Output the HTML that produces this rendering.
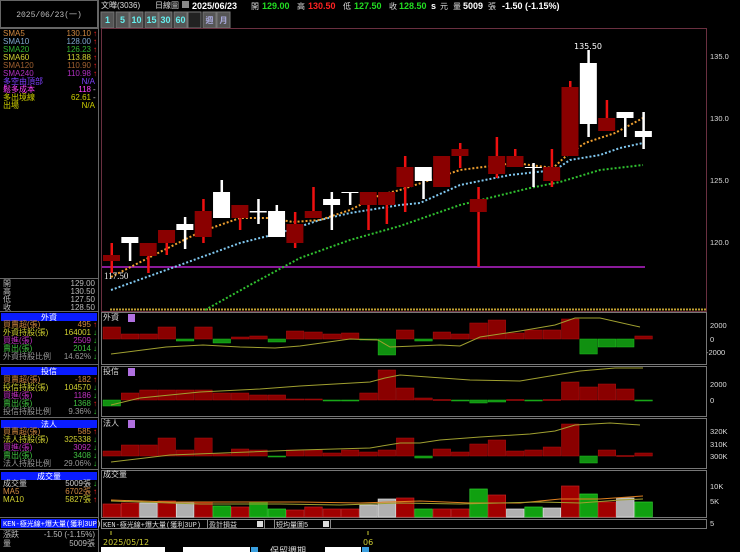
<!DOCTYPE html>
<html><head><meta charset="utf-8"><style>
html,body{margin:0;padding:0;background:#000;width:740px;height:552px;overflow:hidden}
svg{display:block}
text{font-family:"Liberation Sans","Noto Sans CJK TC",sans-serif}
.s{font-size:8px}
.m{font-family:"Liberation Mono","Noto Sans CJK TC",monospace;font-size:8px}
.k{font-family:"Liberation Mono","Noto Sans CJK TC",monospace;font-size:7px}
</style></head><body>
<svg id="g" width="740" height="552" xmlns="http://www.w3.org/2000/svg">
<rect width="740" height="552" fill="#000"/>
<rect x="0.5" y="0.5" width="97" height="27" fill="none" stroke="#666"/>
<text x="49" y="17" class="m" fill="#bbb" text-anchor="middle">2025/06/23(一)</text>
<line x1="98.5" y1="0" x2="98.5" y2="552" stroke="#666"/>
<line x1="0" y1="28.5" x2="98" y2="28.5" stroke="#666"/>
<g class="m">
<text x="3" y="36" fill="#d08840">SMA5</text><text x="91" y="36" fill="#d08840" text-anchor="end">130.10</text><text x="93" y="36" fill="#f22">↑</text>
<text x="3" y="44" fill="#80a8d0">SMA10</text><text x="91" y="44" fill="#80a8d0" text-anchor="end">128.00</text><text x="93" y="44" fill="#f22">↑</text>
<text x="3" y="52" fill="#30b030">SMA20</text><text x="91" y="52" fill="#30b030" text-anchor="end">126.23</text><text x="93" y="52" fill="#f22">↑</text>
<text x="3" y="60" fill="#d0d030">SMA60</text><text x="91" y="60" fill="#d0d030" text-anchor="end">113.88</text><text x="93" y="60" fill="#f22">↑</text>
<text x="3" y="68" fill="#a06030">SMA120</text><text x="91" y="68" fill="#a06030" text-anchor="end">110.90</text><text x="93" y="68" fill="#f22">↑</text>
<text x="3" y="76" fill="#b030c0">SMA240</text><text x="91" y="76" fill="#b030c0" text-anchor="end">110.98</text><text x="93" y="76" fill="#f22">↑</text>
<text x="3" y="84" fill="#8040ff">多空由頂部</text><text x="95" y="84" fill="#8040ff" text-anchor="end">N/A</text>
<text x="3" y="92" fill="#ff40ff">鬆多成本</text><text x="91" y="92" fill="#ff40ff" text-anchor="end">118</text><text x="93" y="92" fill="#ccc">-</text>
<text x="3" y="100" fill="#d0d000">多出境線</text><text x="91" y="100" fill="#d0d000" text-anchor="end">62.61</text><text x="93" y="100" fill="#ccc">-</text>
<text x="3" y="108" fill="#d0d000">出場</text><text x="95" y="108" fill="#d0d000" text-anchor="end">N/A</text>
</g>
<line x1="0" y1="278.5" x2="98" y2="278.5" stroke="#666"/>
<g class="m" fill="#bbb">
<text x="3" y="286">開</text><text x="95" y="286" text-anchor="end">129.00</text>
<text x="3" y="294">高</text><text x="95" y="294" text-anchor="end">130.50</text>
<text x="3" y="302">低</text><text x="95" y="302" text-anchor="end">127.50</text>
<text x="3" y="310">收</text><text x="95" y="310" text-anchor="end">128.50</text>
</g>
<line x1="0" y1="311.5" x2="98" y2="311.5" stroke="#666"/>
<rect x="1" y="313" width="96" height="8" fill="#0a1cff"/><text x="49" y="320" class="m" fill="#fff" text-anchor="middle">外資</text>
<g class="m">
<text x="3" y="327" fill="#d08840">買賣超(張)</text><text x="91" y="327" fill="#d08840" text-anchor="end">495</text><text x="93" y="327" fill="#f22">↑</text>
<text x="3" y="335" fill="#d0d030">外資持股(張)</text><text x="91" y="335" fill="#d0d030" text-anchor="end">164001</text><text x="93" y="335" fill="#3c3">↓</text>
<text x="3" y="343" fill="#c030c0">買進(張)</text><text x="91" y="343" fill="#c030c0" text-anchor="end">2509</text><text x="93" y="343" fill="#3c3">↓</text>
<text x="3" y="351" fill="#40c040">賣出(張)</text><text x="91" y="351" fill="#40c040" text-anchor="end">2014</text><text x="93" y="351" fill="#3c3">↓</text>
<text x="3" y="359" fill="#999">外資持股比例</text><text x="91" y="359" fill="#999" text-anchor="end">14.62%</text><text x="93" y="359" fill="#3c3">↓</text>
</g>
<line x1="0" y1="364.5" x2="98" y2="364.5" stroke="#666"/>
<rect x="1" y="367" width="96" height="8" fill="#0a1cff"/><text x="49" y="374" class="m" fill="#fff" text-anchor="middle">投信</text>
<g class="m">
<text x="3" y="382" fill="#d08840">買賣超(張)</text><text x="91" y="382" fill="#d08840" text-anchor="end">-182</text><text x="93" y="382" fill="#f22">↑</text>
<text x="3" y="390" fill="#d0d030">投信持股(張)</text><text x="91" y="390" fill="#d0d030" text-anchor="end">104570</text><text x="93" y="390" fill="#3c3">↓</text>
<text x="3" y="398" fill="#c030c0">買進(張)</text><text x="91" y="398" fill="#c030c0" text-anchor="end">1186</text><text x="93" y="398" fill="#3c3">↓</text>
<text x="3" y="406" fill="#40c040">賣出(張)</text><text x="91" y="406" fill="#40c040" text-anchor="end">1368</text><text x="93" y="406" fill="#f22">↑</text>
<text x="3" y="414" fill="#999">投信持股比例</text><text x="91" y="414" fill="#999" text-anchor="end">9.36%</text><text x="93" y="414" fill="#3c3">↓</text>
</g>
<line x1="0" y1="417.5" x2="98" y2="417.5" stroke="#666"/>
<rect x="1" y="420" width="96" height="8" fill="#0a1cff"/><text x="49" y="427" class="m" fill="#fff" text-anchor="middle">法人</text>
<g class="m">
<text x="3" y="434" fill="#d08840">買賣超(張)</text><text x="91" y="434" fill="#d08840" text-anchor="end">585</text><text x="93" y="434" fill="#f22">↑</text>
<text x="3" y="442" fill="#d0d030">法人持股(張)</text><text x="91" y="442" fill="#d0d030" text-anchor="end">325338</text><text x="93" y="442" fill="#3c3">↓</text>
<text x="3" y="450" fill="#c030c0">買進(張)</text><text x="91" y="450" fill="#c030c0" text-anchor="end">3092</text><text x="93" y="450" fill="#3c3">↓</text>
<text x="3" y="458" fill="#40c040">賣出(張)</text><text x="91" y="458" fill="#40c040" text-anchor="end">3408</text><text x="93" y="458" fill="#3c3">↓</text>
<text x="3" y="466" fill="#999">法人持股比例</text><text x="91" y="466" fill="#999" text-anchor="end">29.06%</text><text x="93" y="466" fill="#3c3">↓</text>
</g>
<line x1="0" y1="469.5" x2="98" y2="469.5" stroke="#666"/>
<rect x="1" y="472" width="96" height="8" fill="#0a1cff"/><text x="49" y="479" class="m" fill="#fff" text-anchor="middle">成交量</text>
<g class="m">
<text x="3" y="486" fill="#ccc">成交量</text><text x="91" y="486" fill="#ccc" text-anchor="end">5009張</text><text x="93" y="486" fill="#3c3">↓</text>
<text x="3" y="494" fill="#d08840">MA5</text><text x="91" y="494" fill="#d08840" text-anchor="end">6702張</text><text x="93" y="494" fill="#f22">↑</text>
<text x="3" y="502" fill="#d0d030">MA10</text><text x="91" y="502" fill="#d0d030" text-anchor="end">5827張</text><text x="93" y="502" fill="#f22">↑</text>
</g>
<line x1="0" y1="517.5" x2="98" y2="517.5" stroke="#666"/>
<rect x="1" y="519" width="96" height="9" fill="#0a1cff"/><text x="3" y="526" class="k" fill="#fff">KEN-極光線+爆大量(獲利3UP)</text>
<line x1="0" y1="529.5" x2="98" y2="529.5" stroke="#666"/>
<g class="m" fill="#bbb">
<text x="3" y="537">漲跌</text><text x="95" y="537" text-anchor="end">-1.50 (-1.15%)</text>
<text x="3" y="546">量</text><text x="95" y="546" text-anchor="end">5009張</text>
</g>

<text x="101" y="8" class="s" fill="#ddd">文曄(3036)</text>
<text x="155" y="8" class="s" fill="#ddd">日線圖</text>
<rect x="182" y="1" width="7" height="7" fill="#888"/>
<g style="font-family:'DejaVu Sans',sans-serif;font-weight:bold;font-size:9px">
<text x="192" y="9" fill="#fff">2025/06/23</text>
<text x="251" y="9" class="s" fill="#ddd" style="font-weight:normal">開</text><text x="262" y="9" fill="#2d2">129.00</text>
<text x="297" y="9" class="s" fill="#ddd" style="font-weight:normal">高</text><text x="308" y="9" fill="#f22">130.50</text>
<text x="343" y="9" class="s" fill="#ddd" style="font-weight:normal">低</text><text x="354" y="9" fill="#2d2">127.50</text>
<text x="389" y="9" class="s" fill="#ddd" style="font-weight:normal">收</text><text x="399" y="9" fill="#2d2">128.50</text>
<text x="431" y="9" fill="#fff">s</text><text x="440" y="9" class="s" fill="#ddd" style="font-weight:normal">元</text>
<text x="453" y="9" class="s" fill="#ddd" style="font-weight:normal">量</text><text x="463" y="9" fill="#fff">5009</text>
<text x="488" y="9" class="s" fill="#ddd" style="font-weight:normal">張</text><text x="502" y="9" fill="#fff">-1.50 (-1.15%)</text>
</g>
<g id="btns"></g>
<rect x="101.5" y="28.5" width="605" height="283" fill="none" stroke="#6a3040"/>
<g id="main"></g>
<text x="104" y="279" style="font-family:'Liberation Serif',serif;font-size:9px" fill="#eee">117.50</text>
<text x="574" y="49" style="font-family:'DejaVu Sans',sans-serif;font-size:8px" fill="#fff">135.50</text>
<g style="font-family:'DejaVu Sans',sans-serif;font-size:7.5px" fill="#ddd">
<text x="710" y="59">135.0</text><text x="710" y="121">130.0</text><text x="710" y="183">125.0</text><text x="710" y="245">120.0</text>
<text x="710" y="328">2000</text><text x="710" y="342">0</text><text x="706" y="355">-2000</text>
<text x="710" y="387">2000</text><text x="710" y="403">0</text>
<text x="710" y="434">320K</text><text x="710" y="447">310K</text><text x="710" y="459">300K</text>
<text x="710" y="489">10K</text><text x="710" y="504">5K</text><text x="710" y="526">5</text>
</g>
<g fill="none" stroke="#777">
<rect x="101.5" y="312.5" width="605" height="52"/>
<rect x="101.5" y="366.5" width="605" height="50"/>
<rect x="101.5" y="418.5" width="605" height="50"/>
<rect x="101.5" y="470.5" width="605" height="47"/>
<rect x="101.5" y="519.5" width="605" height="9"/>
</g>
<g class="m" fill="#ddd">
<text x="103" y="320">外資</text><text x="103" y="374">投信</text><text x="103" y="426">法人</text><text x="103" y="477">成交量</text>
</g>
<g fill="#b070e0"><rect x="128" y="314" width="7" height="8"/><rect x="128" y="368" width="7" height="8"/><rect x="128" y="420" width="7" height="8"/></g>
<g id="subs"></g>
<rect x="101.5" y="519.5" width="106" height="9" fill="#000" stroke="#888"/>
<text x="103" y="527" class="k" fill="#ddd">KEN-極光線+爆大量(獲利3UP)</text>
<rect x="207.5" y="519.5" width="57" height="9" fill="#000" stroke="#888"/>
<text x="209" y="527" class="k" fill="#ddd">盈計損益</text>
<rect x="257" y="521" width="6" height="6" fill="#ddd"/>
<rect x="274.5" y="519.5" width="56" height="9" fill="#000" stroke="#888"/>
<text x="276" y="527" class="k" fill="#ddd">短均量圖5</text>
<rect x="323" y="521" width="6" height="6" fill="#ddd"/>
<line x1="111" y1="531" x2="111" y2="535" stroke="#cc3"/>
<line x1="368" y1="531" x2="368" y2="535" stroke="#cc3"/>
<text x="103" y="545" style="font-family:'DejaVu Sans',sans-serif;font-size:8px" fill="#cc3">2025/05/12</text>
<text x="363" y="545" style="font-family:'DejaVu Sans',sans-serif;font-size:8px" fill="#cc3">06</text>
<rect x="101" y="547" width="64" height="6" fill="#fff"/>
<rect x="183" y="547" width="67" height="6" fill="#fff"/>
<rect x="251" y="547" width="7" height="6" fill="#3aa0e0"/>
<text x="270" y="554" style="font-size:9px" fill="#ddd">保留週期</text>
<rect x="325" y="547" width="36" height="6" fill="#fff"/>
<rect x="362" y="547" width="7" height="6" fill="#3aa0e0"/>
</svg>
<script>
var NS="http://www.w3.org/2000/svg";
function el(p,t,a){var e=document.createElementNS(NS,t);for(var k in a)e.setAttribute(k,a[k]);p.appendChild(e);return e;}
var b=document.getElementById('btns');
var bl=[["1",101],["5",116],["10",130],["15",145],["30",159],["60",174],["",188],["週",203],["月",217]];
bl.forEach(function(x,i){el(b,'rect',{x:x[1],y:12,width:13,height:16,fill:i==6?'#222':'#555',stroke:'#777'});
var t=el(b,'text',{x:x[1]+6.5,y:23,'text-anchor':'middle',fill:i>6?'#aad':'#6ee','font-size':i>6?'8':'9','font-weight':'bold'});t.textContent=x[0];});
var m=document.getElementById('main');
function X(i){return 103+18.34*i;}
el(m,'line',{x1:102,y1:267,x2:645,y2:267,stroke:'#8a1a9a','stroke-width':2});
el(m,'line',{x1:110,y1:309.5,x2:706,y2:309.5,stroke:'#c0a030','stroke-width':2,'stroke-dasharray':'2 1'});
function pl(pts,c){el(m,'polyline',{points:pts,fill:'none',stroke:c,'stroke-width':2,'stroke-dasharray':'2 2'});}
pl("205,310 250,285 300,258 350,240 400,226 460,205 530,188 560,182 600,170 643,165","#30c030");
pl("111,290 180,265 240,243 280,233 320,220 350,213 400,205 420,203 460,185 510,175 555,170 570,160 600,155 620,148 643,143","#80c8f0");
pl("111,277 160,252 200,232 240,218 270,218 293,222 320,220 350,210 380,195 400,190 460,170 515,163 553,168 565,157 585,143 615,133 643,118","#f0a030");
var C=[["r",255,261,243,273],["w",237,243,237,261],["r",243,256,243,273],["r",230,243,230,255],["w",224,230,217,249],["r",211,237,199,243],["w",192,218,180,218],["r",205,218,205,230],["w",211,211,199,224],["w",211,237,205,237],["r",224,243,212,248],["r",211,218,187,218],["w",199,205,192,230],["w",192,193,192,205],["r",192,205,192,230],["r",192,205,192,224],["r",167,187,156,212],["w",167,181,167,199],["r",156,187,156,187],["r",149,156,143,168],["r",199,212,187,267],["r",156,174,137,178],["r",156,167,149,167],["w",167,168,163,187],["r",167,181,149,187],["r",87,156,81,156],["w",63,124,50,137],["r",118,131,100,131],["w",112,118,112,137],["w",131,137,112,149]];
C.forEach(function(c,i){var x=X(i),cx=x+8.5;
el(m,'rect',{x:cx-1,y:c[3],width:2.5,height:c[4]-c[3],fill:c[0]=='r'?'#ee1010':'#fff'});
if(c[2]-c[1]>0.5)el(m,'rect',{x:x,y:c[1],width:17,height:c[2]-c[1],fill:c[0]=='r'?'#8a0000':'#fff'});
else el(m,'rect',{x:x,y:c[1],width:17,height:1.5,fill:'#fff'});});
var s=document.getElementById('subs');
function bars(vals,zero){vals.forEach(function(v,i){var x=X(i);if(v>=0)el(s,'rect',{x:x,y:zero-v,width:17.5,height:Math.max(v,1),fill:'#8a0000',stroke:'#b01010','stroke-width':0.5});else el(s,'rect',{x:x,y:zero,width:17.5,height:-v,fill:'#109010',stroke:'#20c020','stroke-width':0.5});});}
bars([12,5,5,12,-2,12,-4,2,3,-3,8,7,5,6,-1,-16,9,-2,7,5,16,19,6,9,9,20,-15,-8,-8,3],339);
bars([-6,7,10,10,10,10,7,7,5,5,1,1,-1,-1,7,30,12,2,0.5,-1,-3,-2,0.5,-1,0.5,18,13,16,11,-1],400);
bars([5,11,11,18,6,18,2,7,6,-1,6,6,3,6,4,6,18,-2,7,4,12,16,5,6,9,32,-7,6,0.5,3],456);
var vt=[504,503,503,501,503,502,506,507,502,509,510,507,509,509,505,499,498,509,509,509,489,495,509,507,508,486,494,502,498,502];
var vc="rrgrgrGrGGrrrrggrGrrGrgGgrGrgG";
vt.forEach(function(t,i){var k=vc[i];var f=k=='r'?'#a00000':k=='g'?'#b0b0b0':'#10a010';var st=k=='r'?'#c02020':k=='g'?'#e0e0e0':'#30d030';el(s,'rect',{x:X(i),y:t,width:17.5,height:517-t,fill:f,stroke:st,'stroke-width':0.7});});
function ln(p,c){el(s,'polyline',{points:p,fill:'none',stroke:c,'stroke-width':1});}
ln("111,354 166,347 203,345 240,347 275,348 300,346 350,339 378,340 390,347 440,345 460,346 480,337 520,331 555,325 575,318 600,318 640,327","#a0a030");
ln("111,405 140,398 200,392 260,389 300,386 370,382 385,378 400,375 470,380 520,381 550,376 580,371 615,368 643,368","#a0a030");
ln("111,462 170,455 300,450 370,448 400,443 420,443 440,440 480,437 530,434 555,431 575,425 610,423 640,425","#a0a030");
ln("111,500 170,502 300,502 360,503 420,501 470,503 520,503 560,499 600,499 643,496","#e08020");
ln("111,501 200,504 280,504 340,505 400,503 460,504 540,502 580,503 620,500 643,499","#a0a030");
</script>
</body></html>
